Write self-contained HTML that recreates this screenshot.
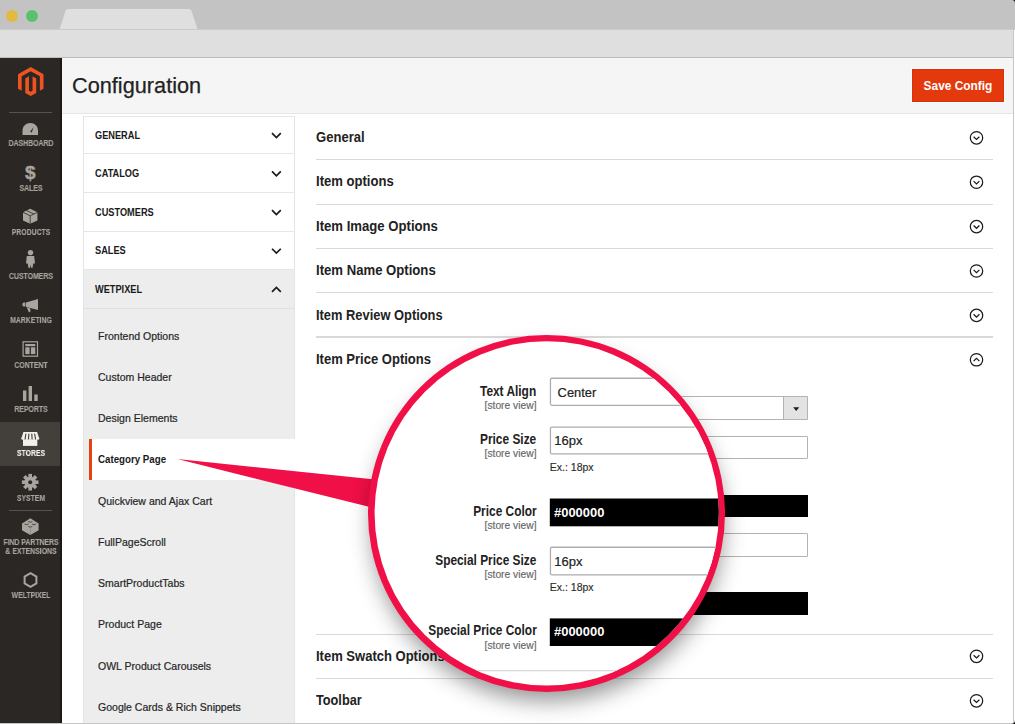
<!DOCTYPE html>
<html><head><meta charset="utf-8"><style>
html,body{margin:0;padding:0;}
body{width:1015px;height:724px;overflow:hidden;position:relative;background:#fff;font-family:"Liberation Sans", sans-serif;}
</style></head><body>
<div style="position:absolute;left:0px;top:0px;width:1015px;height:29px;background:#c3c3c3;"></div>
<div style="position:absolute;left:6px;top:10px;width:12px;height:12px;border-radius:50%;background:#e2b941"></div>
<div style="position:absolute;left:26px;top:10px;width:12px;height:12px;border-radius:50%;background:#5ac26f"></div>
<svg style="position:absolute;left:0;top:0" width="1015" height="30"><path d="M59.5 29.5 L65.6 10.6 Q66.2 9 68 9 L189 9 Q190.8 9 191.4 10.6 L197.6 29.5 Z" fill="#dfdfdf"/></svg>
<div style="position:absolute;left:0px;top:29px;width:1015px;height:1px;background:#cbcbcb;"></div>
<div style="position:absolute;left:0px;top:30px;width:1014px;height:27px;background:#dfdfdf;"></div>
<div style="position:absolute;left:0px;top:57px;width:1014px;height:1px;background:#bcbcbc;"></div>
<div style="position:absolute;left:0px;top:58px;width:62px;height:666px;background:#2b2724;"></div>
<svg style="position:absolute;left:18.0px;top:66.8px" width="25.5" height="29" viewBox="1.609 0 20.782 24" preserveAspectRatio="none"><path fill="#ef5420" d="M12 24l-4.455-2.572v-12l2.97-1.715v12.001L12 20.57l1.485-.856V7.713l2.97 1.715v12L12 24zM22.391 6v12l-2.969 1.714V7.713L12 3.43 4.574 7.713v12L1.609 18V6L12 0l10.391 6z"/></svg>
<div style="position:absolute;left:9px;top:111.5px;width:42.5px;height:1.2px;background:#58524d;"></div>
<div style="position:absolute;left:0px;top:421.6px;width:62px;height:44px;background:#433f3b;"></div>
<div style="position:absolute;left:60.4px;top:58px;width:1.6px;height:666px;background:#1b1815;"></div>
<div style="position:absolute;left:9px;top:510px;width:42.5px;height:1.2px;background:#5a504c;"></div>
<svg style="position:absolute;left:0;top:58px" width="62" height="666" viewBox="0 58 62 666"><path d="M22.5 135 L22.5 131 C22.5 126.2 25.9 123.1 30.25 123.1 C34.6 123.1 38 126.2 38 131 L38 135 Z" fill="#aaa49e"/><path d="M30.2 131.8 L33.6 127 L31.8 132.6 Z" fill="#2b2724"/><text x="30.2" y="179.2" font-family="Liberation Sans" font-weight="700" font-size="19" text-anchor="middle" fill="#aaa49e" stroke="#aaa49e" stroke-width="0.4">$</text><path d="M30.2 208.8 L37.4 212.3 L37.4 220.6 L30.2 223.8 L23 220.6 L23 212.3 Z" fill="#aaa49e"/><path d="M23 212.3 L30.2 215.8 L37.4 212.3 M30.2 215.8 L30.2 223.8 M26.5 210.5 L33.8 214" stroke="#2b2724" stroke-width="0.8" fill="none"/><circle cx="30.5" cy="252.6" r="2.7" fill="#aaa49e"/><path d="M26.8 256 L34.2 256 L35 263.5 L33.2 263.5 L32.6 267.7 L31 267.7 L30.5 264.5 L30 267.7 L28.4 267.7 L27.8 263.5 L26 263.5 Z" fill="#aaa49e"/><path d="M23.6 302.6 L25.4 302.6 L25.4 306.4 L23.6 306.4 Q22.5 306.4 22.5 304.5 Q22.5 302.6 23.6 302.6 Z" fill="#aaa49e"/><path d="M26 302.4 L38 299 L38 310 L26 307 Z" fill="#aaa49e"/><path d="M26.8 307.4 L30.3 308.5 L30.4 311.6 Q29.9 312.6 28.9 312.2 Z" fill="#aaa49e"/><rect x="23.1" y="341.8" width="14.4" height="14.4" fill="none" stroke="#aaa49e" stroke-width="1.2"/><rect x="25.3" y="344" width="10" height="2.2" fill="#aaa49e"/><rect x="25.3" y="347.3" width="4.3" height="6.8" fill="#aaa49e"/><rect x="30.9" y="347.3" width="4.4" height="6.8" fill="#aaa49e"/><rect x="23" y="390.5" width="3.4" height="10.5" fill="#aaa49e"/><rect x="28.6" y="386" width="3.4" height="15" fill="#aaa49e"/><rect x="34.3" y="394.5" width="3.4" height="6.5" fill="#aaa49e"/><path d="M23.4 432 L37.1 432 L39.3 438.4 Q39.3 439.8 38.1 439.8 L22.5 439.8 Q21.3 439.8 21.3 438.4 Z" fill="#f3efe9"/><rect x="23" y="439.4" width="14.3" height="6.5" fill="#f3efe9"/><path d="M25.9 434 L25.1 438.9 M28.9 434 L28.5 438.9 M31.8 434 L32.1 438.9 M34.7 434 L35.5 438.9" stroke="#3a3632" stroke-width="1.05" stroke-linecap="round"/><g transform="translate(30.2 482.2)" fill="#aaa49e"><rect x="-1.8" y="-8.3" width="3.6" height="4" transform="rotate(0)"/><rect x="-1.8" y="-8.3" width="3.6" height="4" transform="rotate(45)"/><rect x="-1.8" y="-8.3" width="3.6" height="4" transform="rotate(90)"/><rect x="-1.8" y="-8.3" width="3.6" height="4" transform="rotate(135)"/><rect x="-1.8" y="-8.3" width="3.6" height="4" transform="rotate(180)"/><rect x="-1.8" y="-8.3" width="3.6" height="4" transform="rotate(225)"/><rect x="-1.8" y="-8.3" width="3.6" height="4" transform="rotate(270)"/><rect x="-1.8" y="-8.3" width="3.6" height="4" transform="rotate(315)"/><circle r="5.8"/><circle r="2" fill="#2b2724"/></g><path d="M30.3 518.3 L38.6 523.4 L38.6 530.2 L30.3 535.1 L22 530.2 L22 523.4 Z" fill="#aaa49e"/><path d="M28.3 521.6 Q30.3 522.8 32.3 521.6 M24.5 524.1 Q26.5 525.3 28.5 524.1 M32.1 524.1 Q34.1 525.3 36.1 524.1 M28.3 526.5 Q30.3 527.7 32.3 526.5" stroke="#2b2724" stroke-width="0.9" fill="none" opacity="0.8"/><path d="M30.3 528 L30.3 535" stroke="#2b2724" stroke-width="0.4" opacity="0.5"/><path d="M30.5 573.2 L36.4 576.6 L36.4 583.4 L30.5 586.8 L24.6 583.4 L24.6 576.6 Z" fill="none" stroke="#aaa49e" stroke-width="2"/></svg>
<div style="position:absolute;left:62px;top:58px;width:951px;height:55px;background:#f5f5f5;"></div>
<div style="position:absolute;left:62px;top:112.6px;width:951px;height:1px;background:#e6e6e6;"></div>
<div style="position:absolute;left:72.00px;top:75.05px;font-size:21.8px;line-height:21.8px;font-weight:400;color:#222222;white-space:nowrap;transform:scaleX(0.996);transform-origin:0 0;-webkit-text-stroke:0.25px #222;">Configuration</div>
<div style="position:absolute;left:911.5px;top:69.3px;width:92px;height:32.8px;background:#e3390d;border:1px solid #d8320a;box-sizing:border-box;box-shadow:0 0 0 1px #fbfbfb;"></div>
<div style="position:absolute;left:657.50px;width:600px;text-align:center;top:79.96px;font-size:12.8px;line-height:12.8px;font-weight:700;color:#ffffff;white-space:nowrap;transform:scaleX(0.93);transform-origin:50% 0;">Save Config</div>
<div style="position:absolute;left:83px;top:116px;width:212px;height:608px;background:#ffffff;"></div>
<div style="position:absolute;left:83px;top:269.5px;width:212px;height:454.5px;background:#ededed;"></div>
<div style="position:absolute;left:89px;top:438.6px;width:206px;height:41.7px;background:#ffffff;"></div>
<div style="position:absolute;left:89px;top:438.6px;width:2.6px;height:41.7px;background:#e5420e;"></div>
<div style="position:absolute;left:83px;top:116px;width:212px;height:1px;background:#e6e6e6;"></div>
<div style="position:absolute;left:83px;top:116px;width:1px;height:608px;background:#e4e4e4;"></div>
<div style="position:absolute;left:294px;top:116px;width:1px;height:322.6px;background:#e4e4e4;"></div>
<div style="position:absolute;left:294px;top:480.3px;width:1px;height:244px;background:#e4e4e4;"></div>
<div style="position:absolute;left:83px;top:153.29999999999998px;width:212px;height:1.2px;background:#e6e6e6;"></div>
<div style="position:absolute;left:94.60px;top:130.23px;font-size:10.6px;line-height:10.6px;font-weight:700;color:#1a1a1a;white-space:nowrap;transform:scaleX(0.87);transform-origin:0 0;">GENERAL</div>
<svg style="position:absolute;left:0;top:0" width="300" height="320"><path d="M272 133.15 L276.4 137.54999999999998 L280.8 133.15" fill="none" stroke="#1a1a1a" stroke-width="1.7"/></svg>
<div style="position:absolute;left:83px;top:192.1px;width:212px;height:1.2px;background:#e6e6e6;"></div>
<div style="position:absolute;left:94.60px;top:167.93px;font-size:10.6px;line-height:10.6px;font-weight:700;color:#1a1a1a;white-space:nowrap;transform:scaleX(0.87);transform-origin:0 0;">CATALOG</div>
<svg style="position:absolute;left:0;top:0" width="300" height="320"><path d="M272 171.4 L276.4 175.79999999999998 L280.8 171.4" fill="none" stroke="#1a1a1a" stroke-width="1.7"/></svg>
<div style="position:absolute;left:83px;top:230.79999999999998px;width:212px;height:1.2px;background:#e6e6e6;"></div>
<div style="position:absolute;left:94.60px;top:206.73px;font-size:10.6px;line-height:10.6px;font-weight:700;color:#1a1a1a;white-space:nowrap;transform:scaleX(0.87);transform-origin:0 0;">CUSTOMERS</div>
<svg style="position:absolute;left:0;top:0" width="300" height="320"><path d="M272 210.15 L276.4 214.54999999999998 L280.8 210.15" fill="none" stroke="#1a1a1a" stroke-width="1.7"/></svg>
<div style="position:absolute;left:83px;top:269.3px;width:212px;height:1.2px;background:#e6e6e6;"></div>
<div style="position:absolute;left:94.60px;top:245.43px;font-size:10.6px;line-height:10.6px;font-weight:700;color:#1a1a1a;white-space:nowrap;transform:scaleX(0.87);transform-origin:0 0;">SALES</div>
<svg style="position:absolute;left:0;top:0" width="300" height="320"><path d="M272 248.75 L276.4 253.14999999999998 L280.8 248.75" fill="none" stroke="#1a1a1a" stroke-width="1.7"/></svg>
<div style="position:absolute;left:83px;top:308.1px;width:212px;height:1.2px;background:#e0e0e0;"></div>
<div style="position:absolute;left:94.60px;top:283.93px;font-size:10.6px;line-height:10.6px;font-weight:700;color:#1a1a1a;white-space:nowrap;transform:scaleX(0.87);transform-origin:0 0;">WETPIXEL</div>
<svg style="position:absolute;left:0;top:0" width="300" height="320"><path d="M272 291.8 L276.4 287.40000000000003 L280.8 291.8" fill="none" stroke="#1a1a1a" stroke-width="1.7"/></svg>
<div style="position:absolute;left:98.00px;top:330.66px;font-size:10.8px;line-height:10.8px;font-weight:400;color:#262626;white-space:nowrap;transform:scaleX(0.975);transform-origin:0 0;-webkit-text-stroke:0.2px #262626;">Frontend Options</div>
<div style="position:absolute;left:98.00px;top:371.91px;font-size:10.8px;line-height:10.8px;font-weight:400;color:#262626;white-space:nowrap;transform:scaleX(0.975);transform-origin:0 0;-webkit-text-stroke:0.2px #262626;">Custom Header</div>
<div style="position:absolute;left:98.00px;top:413.16px;font-size:10.8px;line-height:10.8px;font-weight:400;color:#262626;white-space:nowrap;transform:scaleX(0.975);transform-origin:0 0;-webkit-text-stroke:0.2px #262626;">Design Elements</div>
<div style="position:absolute;left:98.30px;top:454.49px;font-size:10.7px;line-height:10.7px;font-weight:700;color:#1a1a1a;white-space:nowrap;transform:scaleX(0.91);transform-origin:0 0;">Category Page</div>
<div style="position:absolute;left:98.00px;top:495.66px;font-size:10.8px;line-height:10.8px;font-weight:400;color:#262626;white-space:nowrap;transform:scaleX(0.975);transform-origin:0 0;-webkit-text-stroke:0.2px #262626;">Quickview and Ajax Cart</div>
<div style="position:absolute;left:98.00px;top:536.91px;font-size:10.8px;line-height:10.8px;font-weight:400;color:#262626;white-space:nowrap;transform:scaleX(0.975);transform-origin:0 0;-webkit-text-stroke:0.2px #262626;">FullPageScroll</div>
<div style="position:absolute;left:98.00px;top:578.16px;font-size:10.8px;line-height:10.8px;font-weight:400;color:#262626;white-space:nowrap;transform:scaleX(0.975);transform-origin:0 0;-webkit-text-stroke:0.2px #262626;">SmartProductTabs</div>
<div style="position:absolute;left:98.00px;top:619.41px;font-size:10.8px;line-height:10.8px;font-weight:400;color:#262626;white-space:nowrap;transform:scaleX(0.975);transform-origin:0 0;-webkit-text-stroke:0.2px #262626;">Product Page</div>
<div style="position:absolute;left:98.00px;top:660.66px;font-size:10.8px;line-height:10.8px;font-weight:400;color:#262626;white-space:nowrap;transform:scaleX(0.975);transform-origin:0 0;-webkit-text-stroke:0.2px #262626;">OWL Product Carousels</div>
<div style="position:absolute;left:98.00px;top:701.91px;font-size:10.8px;line-height:10.8px;font-weight:400;color:#262626;white-space:nowrap;transform:scaleX(0.975);transform-origin:0 0;-webkit-text-stroke:0.2px #262626;">Google Cards &amp; Rich Snippets</div>
<div style="position:absolute;left:316.00px;top:130.10px;font-size:14.3px;line-height:14.3px;font-weight:700;color:#222222;white-space:nowrap;transform:scaleX(0.913006993006993);transform-origin:0 0;">General</div>
<div style="position:absolute;left:316.00px;top:174.40px;font-size:14.3px;line-height:14.3px;font-weight:700;color:#222222;white-space:nowrap;transform:scaleX(0.9149090909090909);transform-origin:0 0;">Item options</div>
<div style="position:absolute;left:316.00px;top:218.70px;font-size:14.3px;line-height:14.3px;font-weight:700;color:#222222;white-space:nowrap;transform:scaleX(0.9187132867132866);transform-origin:0 0;">Item Image Options</div>
<div style="position:absolute;left:316.00px;top:263.20px;font-size:14.3px;line-height:14.3px;font-weight:700;color:#222222;white-space:nowrap;transform:scaleX(0.9187132867132866);transform-origin:0 0;">Item Name Options</div>
<div style="position:absolute;left:316.00px;top:307.50px;font-size:14.3px;line-height:14.3px;font-weight:700;color:#222222;white-space:nowrap;transform:scaleX(0.9006433566433565);transform-origin:0 0;">Item Review Options</div>
<div style="position:absolute;left:316.00px;top:351.80px;font-size:14.3px;line-height:14.3px;font-weight:700;color:#222222;white-space:nowrap;transform:scaleX(0.910153846153846);transform-origin:0 0;">Item Price Options</div>
<div style="position:absolute;left:316.00px;top:648.80px;font-size:14.3px;line-height:14.3px;font-weight:700;color:#222222;white-space:nowrap;transform:scaleX(0.910153846153846);transform-origin:0 0;">Item Swatch Options</div>
<div style="position:absolute;left:316.00px;top:693.10px;font-size:14.3px;line-height:14.3px;font-weight:700;color:#222222;white-space:nowrap;transform:scaleX(0.8892307692307693);transform-origin:0 0;">Toolbar</div>
<div style="position:absolute;left:316px;top:159.0px;width:676.5px;height:1.3px;background:#d9d9d9;"></div>
<div style="position:absolute;left:316px;top:203.5px;width:676.5px;height:1.3px;background:#d9d9d9;"></div>
<div style="position:absolute;left:316px;top:247.9px;width:676.5px;height:1.3px;background:#d9d9d9;"></div>
<div style="position:absolute;left:316px;top:292.1px;width:676.5px;height:1.3px;background:#d9d9d9;"></div>
<div style="position:absolute;left:316px;top:336.3px;width:676.5px;height:1.3px;background:#d9d9d9;"></div>
<div style="position:absolute;left:316px;top:633.5px;width:676.5px;height:1.3px;background:#d9d9d9;"></div>
<div style="position:absolute;left:316px;top:678.0px;width:676.5px;height:1.3px;background:#d9d9d9;"></div>
<svg style="position:absolute;left:0;top:0" width="1015" height="724"><circle cx="976.5" cy="137.8" r="6.2" fill="none" stroke="#1c1c1c" stroke-width="1.25"/><path d="M973.6 136.70000000000002 L976.5 139.5 L979.4 136.70000000000002" fill="none" stroke="#1c1c1c" stroke-width="1.25"/><circle cx="976.5" cy="182.2" r="6.2" fill="none" stroke="#1c1c1c" stroke-width="1.25"/><path d="M973.6 181.1 L976.5 183.89999999999998 L979.4 181.1" fill="none" stroke="#1c1c1c" stroke-width="1.25"/><circle cx="976.5" cy="226.6" r="6.2" fill="none" stroke="#1c1c1c" stroke-width="1.25"/><path d="M973.6 225.5 L976.5 228.29999999999998 L979.4 225.5" fill="none" stroke="#1c1c1c" stroke-width="1.25"/><circle cx="976.5" cy="271" r="6.2" fill="none" stroke="#1c1c1c" stroke-width="1.25"/><path d="M973.6 269.9 L976.5 272.7 L979.4 269.9" fill="none" stroke="#1c1c1c" stroke-width="1.25"/><circle cx="976.5" cy="315.4" r="6.2" fill="none" stroke="#1c1c1c" stroke-width="1.25"/><path d="M973.6 314.29999999999995 L976.5 317.09999999999997 L979.4 314.29999999999995" fill="none" stroke="#1c1c1c" stroke-width="1.25"/><circle cx="976.5" cy="359.8" r="6.2" fill="none" stroke="#1c1c1c" stroke-width="1.25"/><path d="M973.6 361.1 L976.5 358.3 L979.4 361.1" fill="none" stroke="#1c1c1c" stroke-width="1.25"/><circle cx="976.5" cy="656.3" r="6.2" fill="none" stroke="#1c1c1c" stroke-width="1.25"/><path d="M973.6 655.1999999999999 L976.5 658.0 L979.4 655.1999999999999" fill="none" stroke="#1c1c1c" stroke-width="1.25"/><circle cx="976.5" cy="700.8" r="6.2" fill="none" stroke="#1c1c1c" stroke-width="1.25"/><path d="M973.6 699.6999999999999 L976.5 702.5 L979.4 699.6999999999999" fill="none" stroke="#1c1c1c" stroke-width="1.25"/></svg>
<div style="position:absolute;left:560px;top:396.3px;width:248px;height:23.9px;border:1px solid #b3b3b3;box-sizing:border-box;background:#fff;border-radius:1px"></div>
<div style="position:absolute;left:783.3px;top:396.3px;width:24.7px;height:23.9px;border:1px solid #b3b3b3;box-sizing:border-box;background:#e3e3e3;border-radius:1px"></div>
<svg style="position:absolute;left:0;top:0" width="1015" height="724"><path d="M793.2 407.2 L799.2 407.2 L796.2 410.9 Z" fill="#1a1a1a"/></svg>
<div style="position:absolute;left:560px;top:436.1px;width:248px;height:23.3px;border:1px solid #b3b3b3;box-sizing:border-box;background:#fff;border-radius:1px"></div>
<div style="position:absolute;left:560px;top:494.5px;width:248px;height:22.8px;background:#000;"></div>
<div style="position:absolute;left:560px;top:533px;width:248px;height:24.1px;border:1px solid #b3b3b3;box-sizing:border-box;background:#fff;border-radius:1px"></div>
<div style="position:absolute;left:560px;top:592px;width:248px;height:23.1px;background:#000;"></div>
<svg style="position:absolute;left:0;top:0" width="1015" height="724"><path d="M177.4 459.1 L380 479.9 L380 509.6 Z" fill="#f00f46"/></svg>
<div style="position:absolute;left:368.1px;top:334.79999999999995px;width:357.2px;height:357.2px;border-radius:50%;box-shadow:1px 12px 22px -3px rgba(0,0,0,0.42);background:#f00f46"></div>
<svg style="position:absolute;left:0;top:0" width="1015" height="724"><defs><clipPath id="mc"><circle cx="546.7" cy="513.4" r="172.1"/></clipPath></defs><circle cx="546.7" cy="513.4" r="172.1" fill="#fff"/><g clip-path="url(#mc)"><rect x="550.45" y="378.25" width="400" height="27.1" rx="1.5" fill="#fff" stroke="#adadad" stroke-width="1.3"/><rect x="550.45" y="427.05" width="400" height="26.9" rx="1.5" fill="#fff" stroke="#adadad" stroke-width="1.3"/><rect x="549.8" y="498.5" width="400" height="27.8" fill="#000"/><rect x="550.45" y="547.25" width="400" height="27.7" rx="1.5" fill="#fff" stroke="#adadad" stroke-width="1.3"/><rect x="549.8" y="618.4" width="400" height="27.6" fill="#000"/><rect x="300" y="670" width="500" height="1.3" fill="#d9d9d9"/></g></svg>
<div style="position:absolute;right:478.50px;top:385.42px;font-size:13.8px;line-height:13.8px;font-weight:700;color:#222222;white-space:nowrap;transform:scaleX(0.8619565217391304);transform-origin:100% 0;">Text Align</div><div style="position:absolute;right:478.50px;top:401.40px;font-size:10.4px;line-height:10.4px;font-weight:400;color:#666666;white-space:nowrap;transform:scaleX(0.99);transform-origin:100% 0;-webkit-text-stroke:0.15px #666;">[store view]</div><div style="position:absolute;right:478.50px;top:433.32px;font-size:13.8px;line-height:13.8px;font-weight:700;color:#222222;white-space:nowrap;transform:scaleX(0.8619565217391304);transform-origin:100% 0;">Price Size</div><div style="position:absolute;right:478.50px;top:449.40px;font-size:10.4px;line-height:10.4px;font-weight:400;color:#666666;white-space:nowrap;transform:scaleX(0.99);transform-origin:100% 0;-webkit-text-stroke:0.15px #666;">[store view]</div><div style="position:absolute;right:478.50px;top:505.22px;font-size:13.8px;line-height:13.8px;font-weight:700;color:#222222;white-space:nowrap;transform:scaleX(0.8619565217391304);transform-origin:100% 0;">Price Color</div><div style="position:absolute;right:478.50px;top:521.30px;font-size:10.4px;line-height:10.4px;font-weight:400;color:#666666;white-space:nowrap;transform:scaleX(0.99);transform-origin:100% 0;-webkit-text-stroke:0.15px #666;">[store view]</div><div style="position:absolute;right:478.50px;top:554.02px;font-size:13.8px;line-height:13.8px;font-weight:700;color:#222222;white-space:nowrap;transform:scaleX(0.8619565217391304);transform-origin:100% 0;">Special Price Size</div><div style="position:absolute;right:478.50px;top:569.50px;font-size:10.4px;line-height:10.4px;font-weight:400;color:#666666;white-space:nowrap;transform:scaleX(0.99);transform-origin:100% 0;-webkit-text-stroke:0.15px #666;">[store view]</div><div style="position:absolute;right:478.50px;top:624.32px;font-size:13.8px;line-height:13.8px;font-weight:700;color:#222222;white-space:nowrap;transform:scaleX(0.8619565217391304);transform-origin:100% 0;">Special Price Color</div><div style="position:absolute;right:478.50px;top:640.50px;font-size:10.4px;line-height:10.4px;font-weight:400;color:#666666;white-space:nowrap;transform:scaleX(0.99);transform-origin:100% 0;-webkit-text-stroke:0.15px #666;">[store view]</div><div style="position:absolute;left:557.60px;top:387.08px;font-size:12.9px;line-height:12.9px;font-weight:400;color:#222;white-space:nowrap;transform-origin:0 0;-webkit-text-stroke:0.2px #222;">Center</div><div style="position:absolute;left:554.20px;top:434.00px;font-size:13.0px;line-height:13.0px;font-weight:400;color:#222;white-space:nowrap;transform-origin:0 0;-webkit-text-stroke:0.2px #222;">16px</div><div style="position:absolute;left:554.20px;top:554.70px;font-size:13.0px;line-height:13.0px;font-weight:400;color:#222;white-space:nowrap;transform-origin:0 0;-webkit-text-stroke:0.2px #222;">16px</div><div style="position:absolute;left:554.20px;top:505.90px;font-size:13.0px;line-height:13.0px;font-weight:700;color:#ffffff;white-space:nowrap;transform:scaleX(0.995);transform-origin:0 0;">#000000</div><div style="position:absolute;left:554.20px;top:625.00px;font-size:13.0px;line-height:13.0px;font-weight:700;color:#ffffff;white-space:nowrap;transform:scaleX(0.995);transform-origin:0 0;">#000000</div><div style="position:absolute;left:549.80px;top:462.11px;font-size:10.5px;line-height:10.5px;font-weight:400;color:#2b2b2b;white-space:nowrap;transform-origin:0 0;-webkit-text-stroke:0.15px #2b2b2b;">Ex.: 18px</div><div style="position:absolute;left:549.80px;top:581.91px;font-size:10.5px;line-height:10.5px;font-weight:400;color:#2b2b2b;white-space:nowrap;transform-origin:0 0;-webkit-text-stroke:0.15px #2b2b2b;">Ex.: 18px</div>
<div style="position:absolute;left:1013px;top:29px;width:1px;height:694px;background:#c6c6c6;"></div>
<div style="position:absolute;left:0px;top:722.8px;width:1015px;height:1.2px;background:#c6c6c6;"></div>
<svg style="position:absolute;left:1010px;top:0" width="5" height="5"><path d="M2 0 L5 0 L5 3 Q5 0 2 0Z" fill="#000"/></svg>
<svg style="position:absolute;left:1010px;top:719px" width="5" height="5"><path d="M5 1 L5 5 L1 5 Q5 5 5 1Z" fill="#000"/></svg>
<div style="position:absolute;left:-269.20px;width:600px;text-align:center;top:139.17px;font-size:8.3px;line-height:8.3px;font-weight:700;color:#aaa49e;white-space:nowrap;transform:scaleX(0.83);transform-origin:50% 0;will-change:transform;-webkit-text-stroke:0.15px #aaa49e;">DASHBOARD</div>
<div style="position:absolute;left:-269.20px;width:600px;text-align:center;top:183.67px;font-size:8.3px;line-height:8.3px;font-weight:700;color:#aaa49e;white-space:nowrap;transform:scaleX(0.83);transform-origin:50% 0;will-change:transform;-webkit-text-stroke:0.15px #aaa49e;">SALES</div>
<div style="position:absolute;left:-269.20px;width:600px;text-align:center;top:227.77px;font-size:8.3px;line-height:8.3px;font-weight:700;color:#aaa49e;white-space:nowrap;transform:scaleX(0.83);transform-origin:50% 0;will-change:transform;-webkit-text-stroke:0.15px #aaa49e;">PRODUCTS</div>
<div style="position:absolute;left:-269.20px;width:600px;text-align:center;top:272.07px;font-size:8.3px;line-height:8.3px;font-weight:700;color:#aaa49e;white-space:nowrap;transform:scaleX(0.83);transform-origin:50% 0;will-change:transform;-webkit-text-stroke:0.15px #aaa49e;">CUSTOMERS</div>
<div style="position:absolute;left:-269.20px;width:600px;text-align:center;top:316.37px;font-size:8.3px;line-height:8.3px;font-weight:700;color:#aaa49e;white-space:nowrap;transform:scaleX(0.83);transform-origin:50% 0;will-change:transform;-webkit-text-stroke:0.15px #aaa49e;">MARKETING</div>
<div style="position:absolute;left:-269.20px;width:600px;text-align:center;top:360.77px;font-size:8.3px;line-height:8.3px;font-weight:700;color:#aaa49e;white-space:nowrap;transform:scaleX(0.83);transform-origin:50% 0;will-change:transform;-webkit-text-stroke:0.15px #aaa49e;">CONTENT</div>
<div style="position:absolute;left:-269.20px;width:600px;text-align:center;top:405.17px;font-size:8.3px;line-height:8.3px;font-weight:700;color:#aaa49e;white-space:nowrap;transform:scaleX(0.83);transform-origin:50% 0;will-change:transform;-webkit-text-stroke:0.15px #aaa49e;">REPORTS</div>
<div style="position:absolute;left:-269.20px;width:600px;text-align:center;top:449.17px;font-size:8.3px;line-height:8.3px;font-weight:700;color:#f3efe9;white-space:nowrap;transform:scaleX(0.83);transform-origin:50% 0;will-change:transform;-webkit-text-stroke:0.15px #f3efe9;">STORES</div>
<div style="position:absolute;left:-269.20px;width:600px;text-align:center;top:493.77px;font-size:8.3px;line-height:8.3px;font-weight:700;color:#aaa49e;white-space:nowrap;transform:scaleX(0.83);transform-origin:50% 0;will-change:transform;-webkit-text-stroke:0.15px #aaa49e;">SYSTEM</div>
<div style="position:absolute;left:-269.20px;width:600px;text-align:center;top:538.07px;font-size:8.3px;line-height:8.3px;font-weight:700;color:#aaa49e;white-space:nowrap;transform:scaleX(0.83);transform-origin:50% 0;will-change:transform;-webkit-text-stroke:0.15px #aaa49e;">FIND PARTNERS</div>
<div style="position:absolute;left:-269.20px;width:600px;text-align:center;top:547.17px;font-size:8.3px;line-height:8.3px;font-weight:700;color:#aaa49e;white-space:nowrap;transform:scaleX(0.83);transform-origin:50% 0;will-change:transform;-webkit-text-stroke:0.15px #aaa49e;">&amp; EXTENSIONS</div>
<div style="position:absolute;left:-269.20px;width:600px;text-align:center;top:590.97px;font-size:8.3px;line-height:8.3px;font-weight:700;color:#aaa49e;white-space:nowrap;transform:scaleX(0.83);transform-origin:50% 0;will-change:transform;-webkit-text-stroke:0.15px #aaa49e;">WELTPIXEL</div>
</body></html>
